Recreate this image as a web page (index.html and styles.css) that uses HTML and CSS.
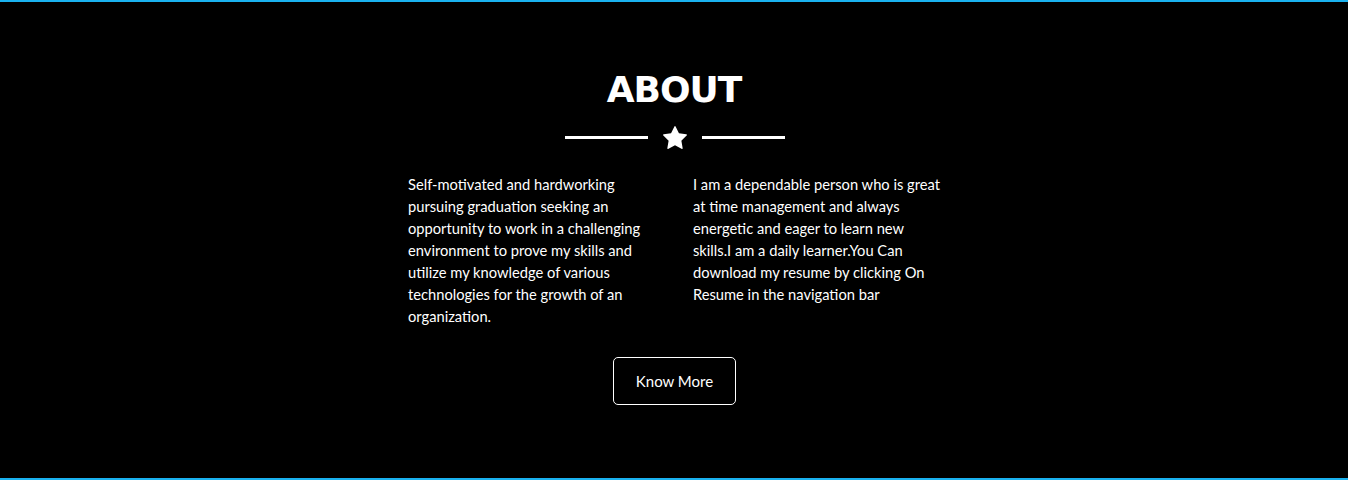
FILE: index.html
```html
<!DOCTYPE html>
<html lang="en">
<head>
<meta charset="utf-8">
<title>About</title>
<link rel="stylesheet" href="styles.css">
</head>
<body>
<section class="about">
  <h2 class="about-title">ABOUT</h2>
  <div class="divider">
    <span class="divider-line"></span>
    <svg class="divider-star" viewBox="64 32 1664 1588" aria-hidden="true">
      <path fill="#fff" d="M1728 647q0 22-26 48l-363 354 86 500q1 7 1 20 0 21-10.5 35.5t-30.5 14.5q-19 0-40-12l-449-236-449 236q-21 12-40 12-21 0-31.5-14.5t-10.5-35.5q0-6 2-20l86-500-364-354q-25-27-25-48 0-37 56-46l502-73 225-455q19-41 49-41t49 41l225 455 502 73q56 9 56 46z"/>
    </svg>
    <span class="divider-line"></span>
  </div>
  <div class="about-cols">
    <p class="about-text">Self-motivated and hardworking pursuing graduation seeking an opportunity to work in a challenging environment to prove my skills and utilize my knowledge of various technologies for the growth of an organization.</p>
    <p class="about-text">I am a dependable person who is great at time management and always energetic and eager to learn new skills.I am a daily learner.You Can download my resume by clicking On Resume in the navigation bar</p>
  </div>
  <div class="about-action">
    <a class="btn-outline" href="#">Know More</a>
  </div>
</section>
</body>
</html>
```

FILE: styles.css
```css
html, body {
  margin: 0;
  padding: 0;
  background: #000;
}

.about {
  box-sizing: border-box;
  height: 480px;
  background: #000;
  border-top: 2px solid #1ab2ef;
  border-bottom: 2px solid #1ab2ef;
  padding-top: 68px;
  color: #fff;
  font-family: Lato, "Liberation Sans", sans-serif;
}

.about-title {
  margin: 0;
  text-align: center;
  font-family: "DejaVu Sans", "Liberation Sans", sans-serif;
  font-weight: 700;
  font-size: 36px;
  line-height: 40px;
  letter-spacing: -1px;
  color: #fff;
}

.divider {
  margin-top: 15px;
  height: 24px;
  padding-left: 2px;
  display: flex;
  justify-content: center;
  align-items: center;
  gap: 15px;
}

.divider-line {
  display: block;
  width: 83px;
  height: 3px;
  background: #fff;
}

.divider-star {
  display: block;
  width: 24px;
  height: 23px;
}

.about-cols {
  box-sizing: border-box;
  width: 548px;
  margin: 24px auto 0;
  padding-left: 8px;
  display: grid;
  grid-template-columns: 250px 250px;
  column-gap: 35px;
}

.about-text {
  margin: 0;
  font-size: 14.7px;
  line-height: 22px;
  color: #fff;
}

.about-action {
  margin-top: 30px;
  display: flex;
  justify-content: center;
}

.btn-outline {
  display: inline-block;
  padding: 12px 22px;
  margin-left: 1px;
  border: 1px solid #fff;
  border-radius: 5px;
  font-size: 15px;
  line-height: 22px;
  color: #fff;
  text-decoration: none;
}
```
